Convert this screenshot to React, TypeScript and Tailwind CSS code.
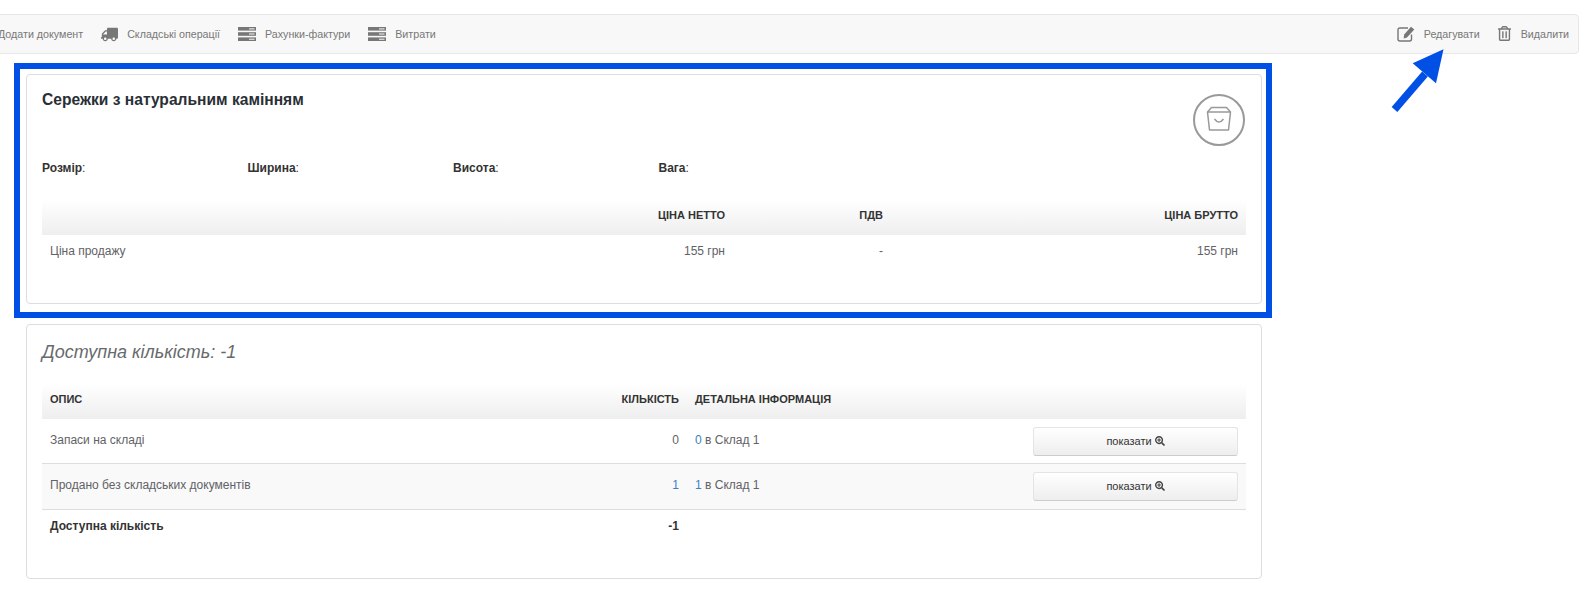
import React from "react";
import { FaTruck, FaRegTrashAlt, FaSearchPlus } from "react-icons/fa";

function ServerIcon() {
  return (
    <svg width="18" height="14" viewBox="0 0 18 14" className="shrink-0">
      <g fill="#777">
        <rect x="0" y="0" width="18" height="3.6" />
        <rect x="0" y="5.2" width="18" height="3.6" />
        <rect x="0" y="10.4" width="18" height="3.6" />
      </g>
      <g fill="#f8f8f8">
        <rect x="11" y="1.4" width="5.5" height="1" />
        <rect x="11" y="6.5" width="5.5" height="1" />
        <rect x="11" y="11.7" width="5.5" height="1" />
      </g>
    </svg>
  );
}

function EditIcon() {
  return (
    <svg width="18" height="16" viewBox="0 0 18 16" className="shrink-0" fill="none">
      <path d="M11 2 H3 Q1 2 1 4 V13 Q1 15 3 15 H12.5 Q14.5 15 14.5 13 V8.5" stroke="#777" strokeWidth="1.4" />
      <path d="M14 0.8 L17.3 3.6 L10 11.4 L6.6 12.6 L7.2 8.6 Z" fill="#777" />
    </svg>
  );
}

function BoxIcon() {
  return (
    <svg width="52" height="52" viewBox="0 0 52 52" fill="none" stroke="#999" className="shrink-0">
      <circle cx="26" cy="26" r="25" strokeWidth="2" />
      <path d="M14.5 18 L18.5 13.5 H33.5 L37.5 18 L35.5 36 H16.5 Z M14.5 18 H37.5" strokeWidth="1.5" strokeLinejoin="round" />
      <path d="M21.5 25 Q26 31 30.5 25" strokeWidth="1.5" />
    </svg>
  );
}

function ToolItem({ icon, label }: { icon: React.ReactNode; label: string }) {
  return (
    <span className="flex items-center gap-[9px]">
      {icon}
      <span>{label}</span>
    </span>
  );
}

function ShowButton() {
  return (
    <button className="flex h-[29px] w-[205px] items-center justify-center gap-[3px] rounded-[3px] border border-[#e4e4e4] border-b-[#ccc] bg-gradient-to-b from-white to-[#eeeeee] text-[11px] text-[#333]">
      показати <FaSearchPlus className="text-[10px] text-[#444]" />
    </button>
  );
}

const headCell = "text-[11px] font-bold uppercase text-[#333] align-middle px-2 pb-[4px]";
const bodyCell = "text-[12px] text-[#5f6266] align-middle px-2";

export default function App() {
  return (
    <div className="relative h-[590px] overflow-hidden bg-white font-['Liberation_Sans',Arial,sans-serif]">
      <div className="ml-[-20px] mr-[3px] pt-[14px]">
        <div className="flex h-[40px] items-center justify-between rounded-[4px] border border-[#e7e7e7] bg-[#f8f8f8] pl-[17px] pr-[9px] text-[10.7px] text-[#777]">
          <div className="flex items-center gap-[18px]">
            <span>Додати документ</span>
            <ToolItem icon={<FaTruck className="text-[17px] -scale-x-100" />} label="Складські операції" />
            <ToolItem icon={<ServerIcon />} label="Рахунки-фактури" />
            <ToolItem icon={<ServerIcon />} label="Витрати" />
          </div>
          <div className="flex items-center gap-[17px]">
            <ToolItem icon={<EditIcon />} label="Редагувати" />
            <ToolItem icon={<FaRegTrashAlt className="text-[15px]" />} label="Видалити" />
          </div>
        </div>
      </div>

      <div className="ml-[26px] mt-[20px] flex w-[1236px] flex-col gap-[20px]">
        <section className="h-[230px] rounded-[4px] border border-[#ddd] bg-white px-[15px] pt-[15px]">
          <div className="flex items-start justify-between">
            <h2 className="text-[15.6px] leading-[20px] font-bold text-[#2a2f36]">Сережки з натуральним камінням</h2>
            <div className="mt-[4px] mr-[1px]"><BoxIcon /></div>
          </div>
          <div className="mt-[14px] grid w-[822px] grid-cols-4 text-[12px] leading-[16px] text-[#333]">
            <span><b>Розмір</b>:</span>
            <span><b>Ширина</b>:</span>
            <span><b>Висота</b>:</span>
            <span><b>Вага</b>:</span>
          </div>
          <table className="mt-[24px] w-full table-fixed border-collapse">
            <colgroup>
              <col />
              <col className="w-[158px]" />
              <col className="w-[355px]" />
            </colgroup>
            <thead>
              <tr className="h-[35px] bg-gradient-to-b from-white to-[#eeeeee]">
                <th className={headCell + " text-right"}>Ціна нетто</th>
                <th className={headCell + " text-right"}>ПДВ</th>
                <th className={headCell + " text-right"}>Ціна брутто</th>
              </tr>
            </thead>
            <tbody>
              <tr className="h-[31px]">
                <td className={bodyCell + " text-right"}>
                  <span className="float-left">Ціна продажу</span>155 грн
                </td>
                <td className={bodyCell + " text-right"}>-</td>
                <td className={bodyCell + " text-right"}>155 грн</td>
              </tr>
            </tbody>
          </table>
        </section>

        <section className="h-[255px] rounded-[4px] border border-[#ddd] bg-white px-[15px]">
          <h3 className="pt-[17px] text-[18px] leading-[20px] italic text-[#676a6c]">Доступна кількість: -1</h3>
          <table className="mt-[22px] w-full table-fixed border-collapse">
            <colgroup>
              <col />
              <col className="w-[106px]" />
              <col className="w-[338px]" />
              <col className="w-[221px]" />
            </colgroup>
            <thead>
              <tr className="h-[35px] bg-gradient-to-b from-white to-[#eeeeee]">
                <th className={headCell + " text-left"}>Опис</th>
                <th className={headCell + " text-right"}>Кількість</th>
                <th className={headCell + " text-left"}>Детальна інформація</th>
                <th />
              </tr>
            </thead>
            <tbody>
              <tr className="h-[44px] border-b border-[#ddd]">
                <td className={bodyCell + " pb-[1px]"}>Запаси на складі</td>
                <td className={bodyCell + " pb-[1px] text-right"}>0</td>
                <td className={bodyCell + " pb-[1px]"}><span className="text-[#3b82c4]">0</span> в Склад 1</td>
                <td className="px-2 pt-[1px]"><ShowButton /></td>
              </tr>
              <tr className="h-[46px] border-b border-[#ddd] bg-[#f9f9f9]">
                <td className={bodyCell + " pb-[2px]"}>Продано без складських документів</td>
                <td className={bodyCell + " pb-[2px] text-right"}><span className="text-[#3b82c4]">1</span></td>
                <td className={bodyCell + " pb-[2px]"}><span className="text-[#3b82c4]">1</span> в Склад 1</td>
                <td className="px-2"><ShowButton /></td>
              </tr>
              <tr className="h-[33px]">
                <td className="px-2 text-[12px] font-bold text-[#333]">Доступна кількість</td>
                <td className="px-2 text-right text-[12px] font-bold text-[#333]">-1</td>
                <td />
                <td />
              </tr>
            </tbody>
          </table>
        </section>
      </div>

      <div className="absolute left-[14px] top-[63px] h-[255px] w-[1258px] border-[6px] border-[#0050e6]" />
      <svg className="absolute left-[1385px] top-[45px]" width="70" height="72" viewBox="0 0 70 72">
        <path d="M9.5 64.5 L40 29" stroke="#0050e6" strokeWidth="7.5" fill="none" />
        <path d="M58.5 4.3 L27.7 18.3 L51 38.3 Z" fill="#0050e6" />
      </svg>
    </div>
  );
}
